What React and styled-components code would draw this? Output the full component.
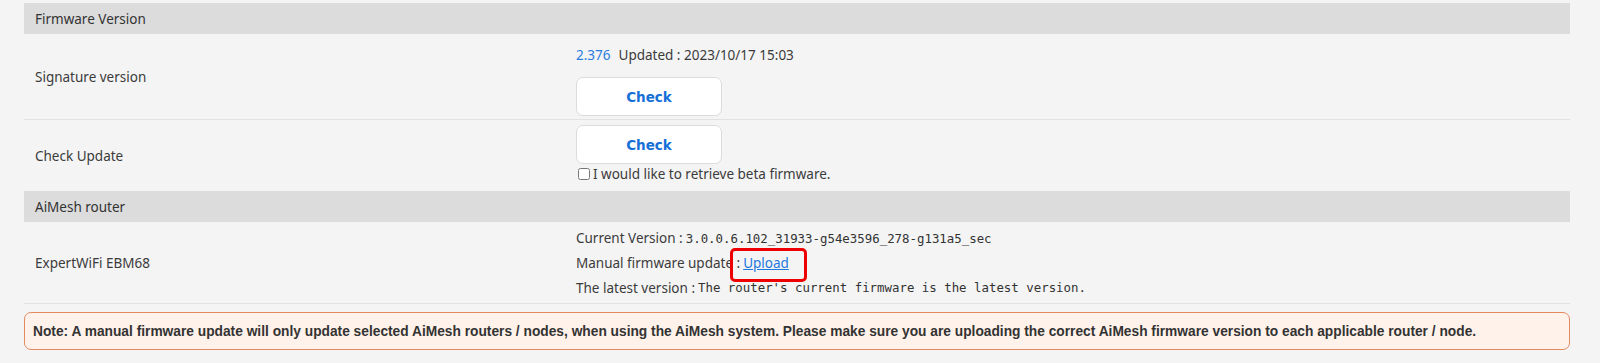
import React from 'react';
import styled, { createGlobalStyle } from 'styled-components';

const GlobalStyle = createGlobalStyle`
	body {
		margin: 0;
		background: #f4f4f4;
		font-family: 'Noto Sans', 'Open Sans', sans-serif;
		color: #3b3b3b;
	}
`;

const Page = styled.div`
	padding: 3px 30px 0 24px;
`;

const Section = styled.div`
	display: grid;
	grid-template-columns: 542px 1fr;
`;

const Header = styled.div`
	grid-column: 1 / -1;
	height: 31px;
	display: flex;
	align-items: center;
	padding-left: 11px;
	background: #dcdcdc;
	font-size: 13.5px;
	color: #333;
`;

const Label = styled.div`
	display: flex;
	align-items: center;
	padding-left: 11px;
	font-size: 13.5px;
	border-bottom: ${p => (p.$line ? '1.5px solid #e2e2e2' : 'none')};
`;

const Value = styled.div`
	display: flex;
	flex-direction: column;
	align-items: flex-start;
	padding: ${p => p.$pad || '5px 0'};
	padding-left: 10px;
	font-size: 13.5px;
	border-bottom: ${p => (p.$line ? '1.5px solid #e2e2e2' : 'none')};
`;

const Line = styled.div`
	height: ${p => p.$h || 20}px;
	display: flex;
	align-items: center;
	white-space: pre;
`;

const Version = styled.span`
	color: #2b7de0;
	margin-right: 8px;
`;

const CheckButton = styled.button`
	width: 146px;
	height: 39px;
	margin-top: ${p => p.$mt || 0}px;
	background: #fff;
	border: 1px solid #dcdcdc;
	border-radius: 7px;
	color: #1670d8;
	font-family: 'DejaVu Sans', Verdana, sans-serif;
	font-weight: bold;
	font-size: 13.5px;
	cursor: pointer;
`;

const Beta = styled.label`
	display: flex;
	align-items: center;
	gap: 3px;
	height: 20px;
	font-size: 13.5px;
	padding-left: 2px;

	input {
		margin: 0;
		width: 12px;
		height: 12px;
	}
`;

const Mono = styled.span`
	font-family: 'DejaVu Sans Mono', 'Liberation Mono', monospace;
	font-size: 12.4px;
	color: #333;
	margin-left: 3px;
`;

const Highlight = styled.span`
	position: relative;
	margin-left: 3px;

	&::after {
		content: '';
		position: absolute;
		left: -13px;
		right: -18px;
		top: -6px;
		bottom: -10px;
		border: 3px solid #ee0000;
		border-radius: 5px;
	}
`;

const UploadLink = styled.a`
	color: #1f78e0;
	text-decoration: underline;
	cursor: pointer;
`;

const Note = styled.div`
	margin-top: 8px;
	height: 36px;
	display: flex;
	align-items: center;
	padding-left: 8px;
	background: #fff2ea;
	border: 1.5px solid #e38a62;
	border-radius: 7px;
	font-family: 'Liberation Sans', Arial, sans-serif;
	font-weight: bold;
	font-size: 13.75px;
	color: #333;
	white-space: nowrap;
`;

const App = () => (
	<Page>
		<GlobalStyle />
		<Section>
			<Header>Firmware Version</Header>
			<Label $line>Signature version</Label>
			<Value $line $pad='11px 0 3px'>
				<Line>
					<Version>2.376</Version>Updated : 2023/10/17 15:03
				</Line>
				<CheckButton $mt={12}>Check</CheckButton>
			</Value>
			<Label>Check Update</Label>
			<Value $pad='5px 0 7px'>
				<CheckButton>Check</CheckButton>
				<Beta>
					<input type='checkbox' /> I would like to retrieve beta firmware.
				</Beta>
			</Value>
			<Header>AiMesh router</Header>
			<Label $line>ExpertWiFi EBM68</Label>
			<Value $line $pad='4px 0 3px'>
				<Line $h={24}>
					Current Version :<Mono>3.0.0.6.102_31933-g54e3596_278-g131a5_sec</Mono>
				</Line>
				<Line $h={25}>
					Manual firmware update :
					<Highlight>
						<UploadLink>Upload</UploadLink>
					</Highlight>
				</Line>
				<Line $h={25}>
					The latest version :<Mono>The router's current firmware is the latest version.</Mono>
				</Line>
			</Value>
		</Section>
		<Note>
			Note: A manual firmware update will only update selected AiMesh routers / nodes, when using the AiMesh system. Please make sure you are uploading the correct AiMesh firmware version to each applicable router / node.
		</Note>
	</Page>
);

export default App;
